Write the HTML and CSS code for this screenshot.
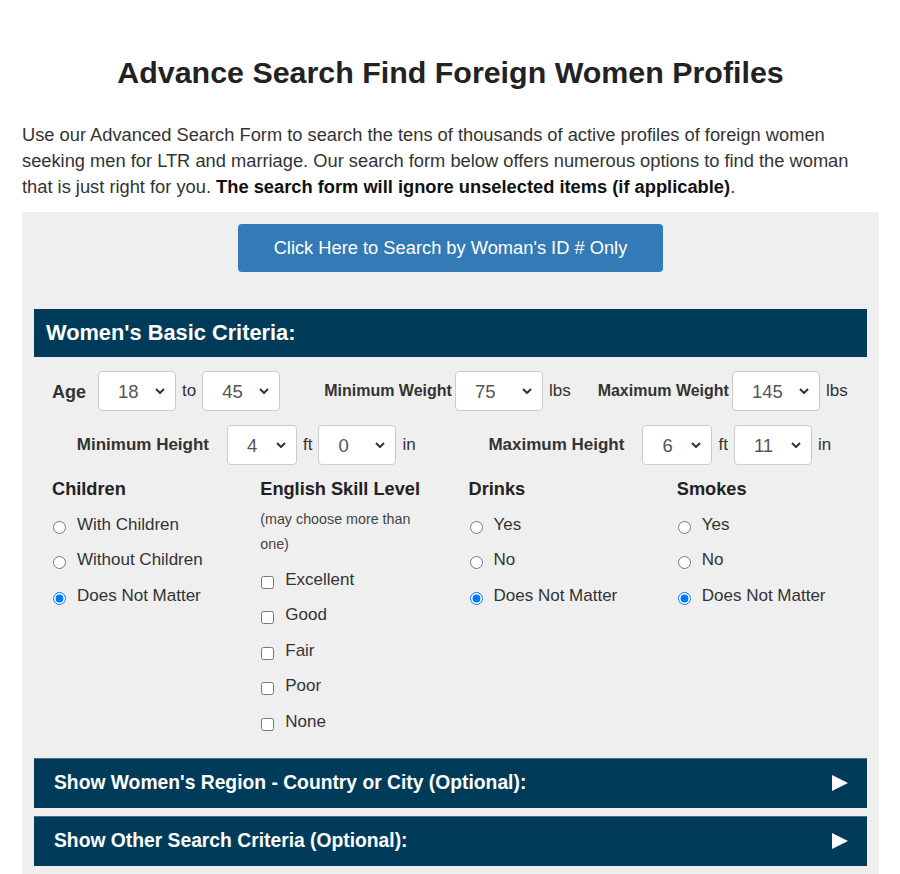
FILE: index.html
```html
<!DOCTYPE html>
<html lang="en">

<head>
    <meta charset="UTF-8">
    <meta name="viewport" content="width=device-width, initial-scale=1.0">
    <title>Advance Search Find Foreign Women Profiles</title>
    <link rel="stylesheet" href="styles.css">
</head>

<body>
    <div class="pagina">
        <h1 class="titulo">Advance Search Find Foreign Women Profiles</h1>

        <p class="intro">
            Use our Advanced Search Form to search the tens of thousands of active profiles of foreign women
            seeking men for LTR and marriage. Our search form below offers numerous options to find the woman
            that is just right for you. <strong>The search form will ignore unselected items (if applicable)</strong>.
        </p>

        <form class="buscador" action="#" method="get">
            <div class="centro">
                <a class="boton-id" href="#">Click Here to Search by Woman's ID # Only</a>
            </div>

            <div class="barra">Women's Basic Criteria:</div>

            <!-- Edad y peso -->
            <div class="fila fila-peso">
                <div class="grupo grupo-edad">
                    <span class="etiqueta etiqueta-edad">Age</span>
                    <span class="caja sel-edad"><select class="sel"><option>18</option></select><svg class="chevron" viewBox="0 0 10 6"><path d="M1 1l4 4 4-4" /></svg></span>
                    <span class="unidad">to</span>
                    <span class="caja sel-edad"><select class="sel"><option>45</option></select><svg class="chevron" viewBox="0 0 10 6"><path d="M1 1l4 4 4-4" /></svg></span>
                </div>
                <div class="grupo grupo-min">
                    <span class="etiqueta">Minimum Weight</span>
                    <span class="caja sel-peso"><select class="sel"><option>75</option></select><svg class="chevron" viewBox="0 0 10 6"><path d="M1 1l4 4 4-4" /></svg></span>
                    <span class="unidad">lbs</span>
                </div>
                <div class="grupo grupo-max">
                    <span class="etiqueta">Maximum Weight</span>
                    <span class="caja sel-peso"><select class="sel"><option>145</option></select><svg class="chevron" viewBox="0 0 10 6"><path d="M1 1l4 4 4-4" /></svg></span>
                    <span class="unidad">lbs</span>
                </div>
            </div>

            <!-- Altura -->
            <div class="fila fila-altura">
                <div class="mitad mitad-izq">
                    <span class="etiqueta etiqueta-altura">Minimum Height</span>
                    <span class="caja sel-pie"><select class="sel"><option>4</option></select><svg class="chevron" viewBox="0 0 10 6"><path d="M1 1l4 4 4-4" /></svg></span>
                    <span class="unidad">ft</span>
                    <span class="caja sel-pulgada"><select class="sel"><option>0</option></select><svg class="chevron" viewBox="0 0 10 6"><path d="M1 1l4 4 4-4" /></svg></span>
                    <span class="unidad">in</span>
                </div>
                <div class="mitad">
                    <span class="etiqueta etiqueta-altura">Maximum Height</span>
                    <span class="caja sel-pie"><select class="sel"><option>6</option></select><svg class="chevron" viewBox="0 0 10 6"><path d="M1 1l4 4 4-4" /></svg></span>
                    <span class="unidad">ft</span>
                    <span class="caja sel-pulgada"><select class="sel"><option>11</option></select><svg class="chevron" viewBox="0 0 10 6"><path d="M1 1l4 4 4-4" /></svg></span>
                    <span class="unidad">in</span>
                </div>
            </div>

            <!-- Opciones -->
            <div class="columnas">
                <div class="columna">
                    <h3 class="col-titulo">Children</h3>
                    <label class="opcion"><input type="radio" name="hijos"> With Children</label>
                    <label class="opcion"><input type="radio" name="hijos"> Without Children</label>
                    <label class="opcion"><input type="radio" name="hijos" checked> Does Not Matter</label>
                </div>
                <div class="columna">
                    <h3 class="col-titulo">English Skill Level</h3>
                    <p class="nota">(may choose more than one)</p>
                    <label class="opcion"><input type="checkbox"> Excellent</label>
                    <label class="opcion"><input type="checkbox"> Good</label>
                    <label class="opcion"><input type="checkbox"> Fair</label>
                    <label class="opcion"><input type="checkbox"> Poor</label>
                    <label class="opcion"><input type="checkbox"> None</label>
                </div>
                <div class="columna">
                    <h3 class="col-titulo">Drinks</h3>
                    <label class="opcion"><input type="radio" name="bebe"> Yes</label>
                    <label class="opcion"><input type="radio" name="bebe"> No</label>
                    <label class="opcion"><input type="radio" name="bebe" checked> Does Not Matter</label>
                </div>
                <div class="columna">
                    <h3 class="col-titulo">Smokes</h3>
                    <label class="opcion"><input type="radio" name="fuma"> Yes</label>
                    <label class="opcion"><input type="radio" name="fuma"> No</label>
                    <label class="opcion"><input type="radio" name="fuma" checked> Does Not Matter</label>
                </div>
            </div>

            <div class="plegable">
                <span>Show Women's Region - Country or City (Optional):</span>
                <span class="flecha"></span>
            </div>
            <div class="plegable">
                <span>Show Other Search Criteria (Optional):</span>
                <span class="flecha"></span>
            </div>
        </form>
    </div>
</body>

</html>
```

FILE: styles.css
```css
body {
    margin: 0;
    font-family: "Liberation Sans", Arial, sans-serif;
    color: #333;
    background: #fff;
}

.pagina {
    width: 857px;
    margin-left: 22px;
    padding-top: 54px;
}

.titulo {
    margin: 0 0 32px;
    text-align: center;
    font-size: 30.4px;
    line-height: 36px;
    color: #222;
}

.intro {
    max-width: 840px;
    margin: 0 0 12px;
    font-size: 18.3px;
    line-height: 26px;
    color: #333;
}

.intro strong {
    color: #111;
}

.buscador {
    background-color: #efefef;
    padding: 12px 12px 8px;
    height: 700px;
    box-sizing: border-box;
}

.centro {
    text-align: center;
}

.boton-id {
    display: inline-block;
    width: 425px;
    height: 48px;
    line-height: 48px;
    background-color: #337ab7;
    color: #fff;
    font-size: 18.3px;
    text-decoration: none;
    border-radius: 4px;
}

.barra {
    margin-top: 37px;
    height: 48px;
    line-height: 48px;
    padding-left: 12px;
    background-color: #003c5a;
    color: #fff;
    font-size: 21.8px;
    font-weight: bold;
}

.fila {
    display: flex;
    align-items: center;
}

.fila-peso {
    margin-top: 14px;
    padding-left: 18px;
}

.grupo {
    display: flex;
    align-items: center;
    gap: 5px;
}

.grupo-min {
    margin-left: 44px;
}

.grupo-max {
    margin-left: 26px;
}

.grupo-min .etiqueta,
.grupo-max .etiqueta {
    margin-right: -2px;
}

.etiqueta {
    font-size: 16px;
    font-weight: bold;
    color: #333;
    white-space: nowrap;
}

.etiqueta-edad {
    font-size: 18px;
    margin-right: 7px;
    padding-top: 3px;
}

.etiqueta-altura {
    font-size: 17px;
    margin-right: 13px;
}

.unidad {
    font-size: 17px;
    margin: 0 1px;
}

.caja {
    position: relative;
    display: inline-block;
    height: 40px;
}

.sel {
    appearance: none;
    -webkit-appearance: none;
    width: 100%;
    height: 40px;
    background-color: #fff;
    border: 1px solid #ccc;
    border-radius: 4px;
    font-family: "Liberation Sans", Arial, sans-serif;
    font-size: 18.5px;
    color: #555;
    padding: 0 6px 0 19px;
    outline: none;
}

.chevron {
    position: absolute;
    right: 11px;
    top: 17px;
    width: 10px;
    height: 6px;
    fill: none;
    stroke: #333;
    stroke-width: 2;
    pointer-events: none;
}

.sel-edad {
    width: 78px;
}

.sel-peso {
    width: 88px;
}

.sel-pie {
    width: 70px;
}

.sel-pulgada {
    width: 78px;
}

.fila-altura {
    margin-top: 14px;
}

.mitad {
    flex: 1;
    display: flex;
    align-items: center;
    justify-content: center;
    gap: 5px;
}

.mitad-izq {
    padding-left: 6px;
}

.columnas {
    display: grid;
    grid-template-columns: repeat(4, 1fr);
    margin-top: 12px;
}

.columna {
    padding-left: 18px;
    display: flex;
    flex-direction: column;
}

.col-titulo {
    margin: 0 0 6px;
    font-size: 18.2px;
    line-height: 24px;
    color: #222;
}

.nota {
    max-width: 160px;
    margin: 0 0 5px;
    font-size: 14.3px;
    line-height: 25px;
    color: #444;
}

.opcion {
    display: flex;
    align-items: center;
    height: 35.5px;
    font-size: 17px;
    color: #333;
}

.opcion input {
    margin: 5px 11px 0 1px;
}

.plegable {
    display: flex;
    justify-content: space-between;
    align-items: center;
    height: 50px;
    padding: 0 19px 0 20px;
    margin-top: 8px;
    background-color: #003c5a;
    border-top: 1px solid #4d6f82;
    box-sizing: border-box;
    color: #fff;
    font-size: 19.3px;
    font-weight: bold;
}

.columnas + .plegable {
    margin-top: 18px;
}

.flecha {
    width: 0;
    height: 0;
    border-top: 8px solid transparent;
    border-bottom: 8px solid transparent;
    border-left: 16px solid #fff;
}
```
